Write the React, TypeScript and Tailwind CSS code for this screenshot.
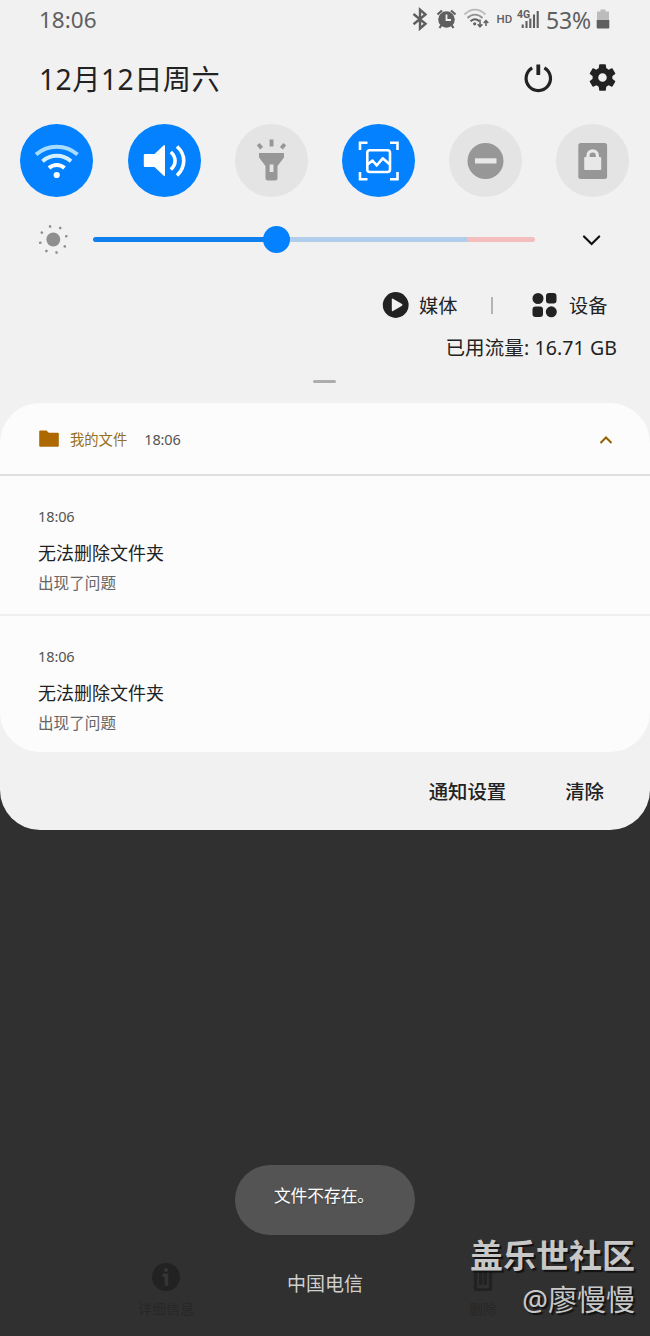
import type { ReactNode } from "react";

type Toggle = {
  id: string;
  active: boolean;
  icon: ReactNode;
};

type Notice = {
  id: number;
  time: string;
  title: string;
  body: string;
};

const notices: Notice[] = [
  { id: 1, time: "18:06", title: "无法删除文件夹", body: "出现了问题" },
  { id: 2, time: "18:06", title: "无法删除文件夹", body: "出现了问题" }
];

function WifiIcon() {
  return (
    <svg className="h-full w-full" viewBox="0 0 73 73" fill="none" stroke="#fff" strokeWidth="4">
      <path d="M16 30.500C28 20 45.500 20 57.500 30.500" stroke="#a6dcff" />
      <path d="M22.500 37.300C31 30 42.500 30 51 37.300" stroke="#d4f0ff" />
      <path d="M29 44C33.500 40 40 40 44.500 44" />
      <circle cx="36.700" cy="51" r="3.100" fill="#fff" stroke="none" />
    </svg>
  );
}

function SoundIcon() {
  return (
    <svg className="h-full w-full" viewBox="0 0 73 73" fill="none" stroke="#fff" strokeWidth="3.600">
      <path d="M17 30h9.500L35.500 21.500q1.500-1.300 1.500.5v29q0 1.800-1.500.5L26.500 43H17q-1.200 0-1.200-1.200V31.200Q15.800 30 17 30Z" fill="#fff" stroke="none" />
      <path d="M42.800 28C48.500 33 48.500 40.500 42.800 45.500" />
      <path d="M49 22.500C58 30.500 58 43 49 51.500" />
    </svg>
  );
}

function TorchIcon() {
  return (
    <svg className="h-full w-full" viewBox="0 0 73 73" fill="#979797">
      <path d="M24 29h25v4.500L42.500 42v12q0 2.500-2.500 2.500h-7q-2.500 0-2.500-2.500V42L24 33.500Z" />
      <rect x="34.600" y="40.500" width="3.900" height="7.500" fill="#e4e4e4" />
      <path d="M34.600 15.500h3.900v7h-3.900ZM21.800 21.300l3-2.300 3.300 4-3 2.400ZM51.200 21.300l-3-2.300-3.300 4 3 2.400Z" />
    </svg>
  );
}

function SmartCaptureIcon() {
  return (
    <svg className="h-full w-full" viewBox="0 0 73 73" fill="none" stroke="#fff" strokeWidth="2.600">
      <path d="M18 26v-7.300h7.500M48 18.700h7.500V26M55.500 48v7.300H48M25.500 55.300H18V48" />
      <rect x="25.300" y="26.200" width="22.700" height="21.800" rx="2.500" />
      <path d="M25.500 40.500l5-4 4.200 5 6-7.200 7 6" strokeLinejoin="round" />
    </svg>
  );
}

function DisturbIcon() {
  return (
    <svg className="h-full w-full" viewBox="0 0 73 73">
      <circle cx="36.500" cy="37" r="18" fill="#979797" />
      <rect x="26" y="34.300" width="21.500" height="5.200" fill="#e8e8e8" />
    </svg>
  );
}

function LockIcon() {
  return (
    <svg className="h-full w-full" viewBox="0 0 73 73">
      <rect x="22.300" y="19" width="28.800" height="36" rx="2.500" fill="#979797" />
      <rect x="28.200" y="33" width="17" height="13" rx="1" fill="#e8e8e8" />
      <path d="M32 33v-1.500a4.700 4.700 0 0 1 9.400 0V33" fill="none" stroke="#e8e8e8" strokeWidth="3.200" />
    </svg>
  );
}

const toggles: Toggle[] = [
  { id: "wifi", active: true, icon: <WifiIcon /> },
  { id: "sound", active: true, icon: <SoundIcon /> },
  { id: "torch", active: false, icon: <TorchIcon /> },
  { id: "capture", active: true, icon: <SmartCaptureIcon /> },
  { id: "disturb", active: false, icon: <DisturbIcon /> },
  { id: "lock", active: false, icon: <LockIcon /> }
];

function StatusIcons() {
  return (
    <svg className="h-10 w-[130px]" viewBox="410 0 130 40" fill="none" stroke="#5f5f5f">
      <path d="M413.500 14l12 9.700-5.500 4.800V9.700l5.500 4.800L413.500 24.300" strokeWidth="2.400" />
      <circle cx="446.500" cy="19.500" r="8.300" fill="#5f5f5f" stroke="none" />
      <path d="M446.500 14.500v5.500h4.500" stroke="#f1f1f1" strokeWidth="1.800" />
      <path d="M437.500 14.500l4.500-4M455.500 14.500l-4.500-4M441.500 25l-2 3M451.500 25l2 3" strokeWidth="2.200" />
      <path d="M464.500 14.500C471 8 479 8 485.500 14.500" stroke="#b9b9b9" strokeWidth="1.900" />
      <path d="M467.500 18C472 13.500 478 13.500 482.500 18" stroke="#929292" strokeWidth="1.900" />
      <path d="M470.500 21.300C473.500 18.700 476.500 18.700 479.300 21.300" strokeWidth="1.900" />
      <circle cx="474.700" cy="23.800" r="1.600" fill="#5f5f5f" stroke="none" />
      <path d="M480 19.500v7M477.700 24.300l2.300 2.500 2.300-2.500M486 26v-5.500M483.700 23l2.300-2.500 2.300 2.500" strokeWidth="1.500" />
      <text x="496.500" y="23" fill="#5f5f5f" stroke="none" className="font-['Roboto',sans-serif] text-[11.500px] font-medium">HD</text>
      <text x="517" y="17.500" fill="#5f5f5f" stroke="none" className="font-['Roboto',sans-serif] text-[10.500px] font-bold">4G</text>
      <path d="M522.700 24.500v3.500M526.500 21v7M530.300 18.500v9.500M534 14.500V28M537.700 11v17" strokeWidth="2.100" />
    </svg>
  );
}

function BatteryIcon() {
  return (
    <svg className="h-10 w-[14px]" viewBox="0 0 14 40">
      <path d="M4.500 9.500h5v2H13V20H1v-8.500h3.500Z" fill="#bcbcbc" />
      <path d="M.7 20h12.600v7.500q0 1-1 1H1.700q-1 0-1-1Z" fill="#5f5f5f" />
    </svg>
  );
}

function PowerIcon() {
  return (
    <svg className="h-8 w-8" viewBox="0 0 32 32" fill="none" stroke="#222" strokeWidth="3.200">
      <path d="M10.200 5.900A12.200 12.200 0 1 0 22.400 5.900" />
      <path d="M16.300 2.500v10.500" strokeWidth="3.800" />
    </svg>
  );
}

function GearIcon() {
  return (
    <svg className="h-[33px] w-[33px]" viewBox="0 0 24 24" fill="#222">
      <path d="M19.140 12.940c.04-.3.060-.61.060-.94 0-.32-.02-.64-.07-.94l2.030-1.580c.18-.14.230-.41.120-.61l-1.920-3.320c-.12-.22-.37-.29-.59-.22l-2.390.96c-.5-.38-1.030-.7-1.620-.94L14.400 2.810c-.04-.24-.24-.41-.48-.41h-3.840c-.24 0-.43.170-.47.410L9.250 5.350C8.660 5.590 8.120 5.920 7.630 6.290L5.240 5.330c-.22-.08-.47 0-.59.220L2.740 8.870c-.12.210-.08.470.12.610l2.030 1.580c-.05.300-.09.630-.09.940s.02.640.07.940l-2.030 1.580c-.18.140-.23.410-.12.610l1.920 3.320c.12.220.37.290.59.220l2.390-.96c.5.380 1.030.7 1.620.94l.36 2.540c.05.240.24.410.48.410h3.840c.24 0 .44-.17.470-.41l.36-2.540c.59-.24 1.130-.56 1.620-.94l2.390.96c.22.080.47 0 .59-.22l1.920-3.320c.12-.22.070-.47-.12-.61zM12 15.100a3.100 3.100 0 1 1 0-6.200 3.100 3.100 0 0 1 0 6.200z" />
    </svg>
  );
}

function SunIcon() {
  return (
    <svg className="h-8 w-8" viewBox="0 0 32 32" fill="#8f8f8f">
      <circle cx="16.300" cy="16.500" r="6.900" />
      {[-14, 31, 76, 121, 166, 211, 256, 301].map((angle) => (
        <rect key={angle} x="15.100" y="1.800" width="2.400" height="2.600" rx=".8" transform={`rotate(${angle} 16.300 16.500)`} />
      ))}
    </svg>
  );
}

function StatusBar() {
  return (
    <div className="flex h-10 items-center pl-[39px] text-[#5f5f5f]">
      <span className="w-[371px] text-[22.500px] leading-10">18:06</span>
      <StatusIcons />
      <span className="ml-[6px] w-[50px] text-[23px] leading-10 tracking-[-0.200px]">53%</span>
      <BatteryIcon />
    </div>
  );
}

function BrightnessRow() {
  return (
    <div className="flex h-[60px] items-center pl-[37px]">
      <SunIcon />
      <div className="relative ml-6 flex h-[5px] w-[442px]">
        <div className="w-[184px] rounded-l-full bg-[#107fee]" />
        <div className="w-[190px] bg-[#b0cdec]" />
        <div className="flex-1 rounded-r-sm bg-[#f4bebe]" />
        <div className="absolute -top-[11px] left-[170px] h-[27px] w-[27px] rounded-full bg-[#0381fe]" />
      </div>
      <svg className="ml-[46px] h-5 w-5" viewBox="0 0 20 20" fill="none" stroke="#111" strokeWidth="2.200" strokeLinecap="round">
        <path d="M3 7.500l7.600 7.500 7.600-7.500" />
      </svg>
    </div>
  );
}

function MediaRow() {
  return (
    <div className="flex h-[50px] items-center pl-[382px] text-[19.200px] text-[#222]">
      <svg className="h-7 w-7" viewBox="0 0 28 28">
        <circle cx="13.700" cy="14" r="12.900" fill="#222" />
        <path d="M9.800 8.500q0-1.300 1.200-.7l9 5.300q1 .8 0 1.600l-9 5.300q-1.200.6-1.200-.7Z" fill="#f1f1f1" />
      </svg>
      <span className="mt-[2px] ml-[9px] w-[72px]">媒体</span>
      <span className="h-[17px] w-[2px] bg-[#b4b4b4]" />
      <svg className="ml-[39px] h-[26px] w-[26px]" viewBox="0 0 26 26" fill="#222">
        <circle cx="6" cy="6.500" r="5.500" />
        <rect x="14" y="1" width="10.500" height="10.500" rx="3" />
        <rect x="0.500" y="14.500" width="10.500" height="10.500" rx="3" />
        <circle cx="19.300" cy="19.800" r="5.500" />
      </svg>
      <span className="mt-[2px] ml-[11px]">设备</span>
    </div>
  );
}

function NoticeItem({ notice }: { notice: Notice }) {
  return (
    <div className="flex h-[138px] flex-col pt-[28px] pl-[38px]">
      <span className="text-[14.500px] leading-6 tracking-[-0.100px] text-[#555]">{notice.time}</span>
      <span className="mt-[9px] text-[18px] leading-8 text-[#222]">{notice.title}</span>
      <span className="text-[15.600px] leading-7 text-[#666]">{notice.body}</span>
    </div>
  );
}

function NotificationCard() {
  return (
    <div className="h-[349px] overflow-hidden rounded-[40px] bg-[#fcfcfc]">
      <div className="flex h-[73px] items-center border-b-2 border-[#dedede] pt-[2px] pl-[39px]">
        <svg className="mb-[2px] h-[18px] w-[20px]" viewBox="0 0 20 18" fill="#ae6800">
          <path d="M1.200.500h6.300l2.300 2.200h9q1 0 1 1v12q0 1-1 1H1.200q-1 0-1-1V1.500q0-1 1-1Z" />
        </svg>
        <span className="ml-[11px] text-[14.300px] text-[#94701d]">我的文件</span>
        <span className="ml-[17px] flex-1 text-[14.500px] tracking-[-0.100px] text-[#555]">18:06</span>
        <svg className="mr-[36px] h-4 w-4" viewBox="0 0 16 16" fill="none" stroke="#946200" strokeWidth="2">
          <path d="M2.500 11L8 5.500l5.500 5.500" />
        </svg>
      </div>
      <NoticeItem notice={notices[0]} />
      <div className="h-[2px] bg-[#efefef]" />
      <NoticeItem notice={notices[1]} />
    </div>
  );
}

function QuickPanel() {
  return (
    <section className="h-[830px] rounded-b-[40px] bg-[#f1f1f1]">
      <StatusBar />
      <div className="flex h-[75px] items-center pl-[39px] text-[#222]">
        <span className="mt-[3px] w-[483px] text-[28.200px] leading-10 tracking-[0.500px]">12月12日周六</span>
        <PowerIcon />
        <span className="ml-[32px]"><GearIcon /></span>
      </div>
      <div className="flex h-[91px] items-center gap-[34.200px] pl-[20.400px]">
        {toggles.map((toggle) => (
          <div key={toggle.id} className={`h-[73px] w-[73px] shrink-0 rounded-full ${toggle.active ? "bg-[#0381fe]" : "bg-[#e4e4e4]"}`}>
            {toggle.icon}
          </div>
        ))}
      </div>
      <div className="mt-[3px]"><BrightnessRow /></div>
      <div className="mt-[11px]"><MediaRow /></div>
      <div className="mt-[3px] pr-[33px] text-right text-[19.500px] leading-[30px] tracking-[0.100px] text-[#222]">已用流量: 16.71 GB</div>
      <div className="mt-[17px] ml-[313px] h-[3px] w-[23px] rounded-full bg-[#adadad]" />
      <div className="mt-[20px]"><NotificationCard /></div>
      <div className="flex h-[80px] items-center justify-end gap-[59px] pr-[46px] text-[19.400px] font-medium text-[#222]">
        <span>通知设置</span>
        <span>清除</span>
      </div>
    </section>
  );
}

export default function App() {
  return (
    <main className="relative h-[1336px] w-[650px] overflow-hidden bg-[#303030] font-['Noto_Sans','Noto_Sans_CJK_SC',sans-serif]">
      <QuickPanel />
      <div className="mx-auto mt-[335px] h-[70px] w-[180px] rounded-full bg-[#545454] pt-[16px] pr-[4px] text-center text-[16.700px] leading-[30px] text-white text-shadow-sm">
        <span className="ml-[2px]">文件不存在。</span>
      </div>
      <div className="grid h-[101px] grid-cols-[332px_1fr] grid-rows-1">
        <div className="flex flex-col items-center pt-[28px] text-[14px] leading-6 text-[#272727]">
          <svg className="h-7 w-7" viewBox="0 0 28 28">
            <circle cx="14" cy="14" r="14" fill="#222" />
            <circle cx="14" cy="7" r="2" fill="#353535" />
            <path d="M10.500 12.200h4v10.500" fill="none" stroke="#353535" strokeWidth="3.600" />
          </svg>
          <span className="mt-[6px]">详细信息</span>
        </div>
        <div className="flex flex-col items-center pt-[28px] pr-[16px] text-[14px] leading-6 text-[#272727]">
          <svg className="h-7 w-7" viewBox="0 0 28 28" fill="none" stroke="#222" strokeWidth="3.400">
            <path d="M3 5h22M6.500 5v20q0 2 2 2h11q2 0 2-2V5M11.700 8v14M16.300 8v14" />
          </svg>
          <span className="mt-[6px]">删除</span>
        </div>
      </div>
      <div className="absolute top-[1269px] left-0 w-full text-center text-[19px] leading-[30px] text-[#cfcfcf]">中国电信</div>
      <div className="absolute top-[1234px] right-[15px] text-right text-[#c8c8c8] [text-shadow:2px_2px_1px_#111]">
        <div className="text-[33px] leading-[44px] font-bold">盖乐世社区</div>
        <div className="text-[29px] leading-[44px]">@廖慢慢</div>
      </div>
    </main>
  );
}
